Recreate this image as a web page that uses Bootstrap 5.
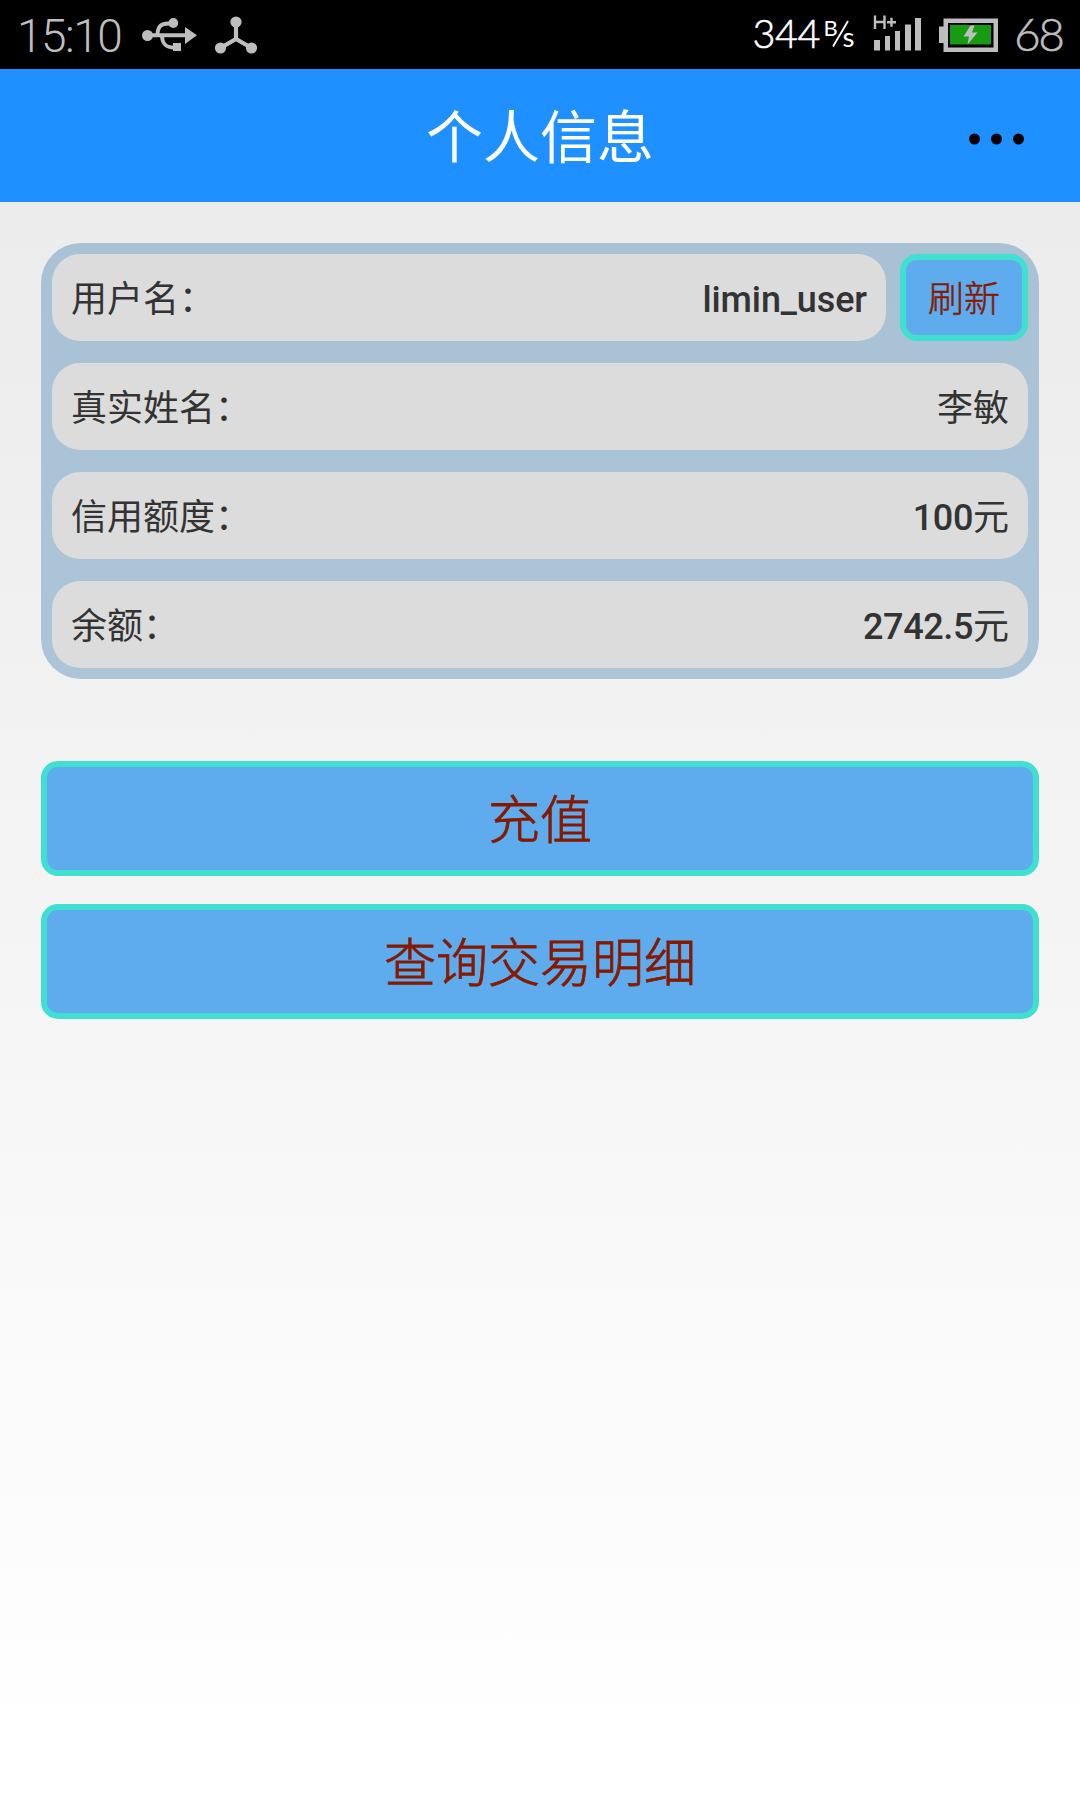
<!DOCTYPE html>
<html lang="zh-CN">
<head>
<meta charset="utf-8">
<meta name="viewport" content="width=device-width, initial-scale=1">
<title>个人信息</title>
<link href="https://cdn.jsdelivr.net/npm/bootstrap@5.3.0/dist/css/bootstrap.min.css" rel="stylesheet">
<style>
  body { font-family: Roboto, "Noto Sans CJK SC", sans-serif; color: #333; min-height: 1800px; background: linear-gradient(#e9e9e9, #fff 1750px); }
  .status-bar { height: 69px; background: #000; color: #bebebe; padding: 0 17px; line-height: 69px; }
  .clock { font-size: 46px; font-weight: 300; width: 106px; padding-top: 2px; letter-spacing: -1.5px; }
  .battery-level { font-family: Lato, sans-serif; font-weight: 300; font-size: 46px; width: 49px; line-height: 67px; letter-spacing: -2.500px; -webkit-text-stroke: .5px #bebebe; }
  .title-bar { height: 133px; background: #1e90ff; color: #fff; }
  .title-bar h1 { font-size: 57px; font-weight: 400; line-height: 133px; padding-top: 3px; }
  .more-btn { right: 50px; top: 3px; height: 133px; }
  .page-body { padding: 41px; }
  .info-panel { background: rgba(70, 130, 180, .4); border-radius: 40px; padding: 11px; gap: 22px; }
  .info-line { height: 87px; border-radius: 28px; background: #dcdcdc; padding: 3px 19px 0; font-size: 36px; font-weight: 400; line-height: 87px; }
  .info-value { font-weight: 500; letter-spacing: -.1px; }
  .amount { letter-spacing: -.4px; }
  .han { font-weight: 400; letter-spacing: 0; }
  .line-group { gap: 14px; }
  .action-btn, .action-btn:hover { --bs-btn-line-height: 1; background: #5eabee; border: 6px solid #40e0d0; border-radius: 17px; color: #861a00; font-weight: 300; -webkit-text-stroke: .8px #861a00; padding: 6px 0 0; }
  .refresh-btn, .refresh-btn:hover { width: 128px; height: 87px; font-size: 36px; padding-top: 4px; -webkit-text-stroke-width: .5px; }
  .wide-btn { height: 115px; font-size: 52px; }
  .action-list { margin-top: 82px; gap: 28px; }
</style>
</head>
<body>
<div class="status-bar d-flex justify-content-between">
  <div class="d-flex">
    <span class="clock">15:10</span>
    <svg width="140" height="69" viewBox="123 0 140 69" fill="#bebebe">
      <circle cx="147.500" cy="35.500" r="5.500"/><circle cx="173.300" cy="23" r="4.900"/>
      <path d="M173 43h8v8h-8zM185 27l12 8.300-12 8.700z"/>
      <path d="M147 35.300H187M157.500 34C158 25 162 23.300 172 23.300M162 36C162.500 44.500 166 47.500 174 47.500" fill="none" stroke="#bebebe" stroke-width="4"/>
      <path d="M236 22V39M220.500 48L236 39L251.500 48" fill="none" stroke="#bebebe" stroke-width="4.200"/>
      <circle cx="236" cy="22" r="5.600"/><circle cx="220.500" cy="48" r="5.600"/><circle cx="251.500" cy="48" r="5.600"/>
    </svg>
  </div>
  <div class="d-flex">
    <svg width="264" height="69" viewBox="750 0 264 69" fill="#bebebe">
      <g fill="#fff" font-family="Lato, sans-serif">
        <text x="752.500" y="47.500" font-size="39.500" font-weight="300" textLength="68" stroke="#fff" stroke-width=".6">344</text>
        <text x="823.500" y="36" font-size="22">B</text>
        <text x="842.500" y="47" font-size="26" textLength="12" lengthAdjust="spacingAndGlyphs">s</text>
        <path d="M848 21L833 46.500" stroke="#fff" stroke-width="1.800"/>
      </g>
      <path d="M874 40h6v10.500h-6zM885 36h5v14.500h-5zM895 31h5v19.500h-5zM905 24.500h6v26h-6zM915 18h6v32.500h-6z"/>
      <path d="M875 15.500V29M884.500 15.500V29M875 22H884.500M887 22.300H896M891.500 17.800V26.800" stroke="#bebebe" stroke-width="2.400" fill="none"/>
      <path fill-rule="evenodd" d="M943.500 18.500H998V52H943.500V43H939V26.500H943.500zM948 23V47.500H993.500V23z"/>
      <path d="M950 25h41v19.500h-41z" fill="#179b12"/>
      <path d="M970.500 25.500L963.500 36.500H969L967.500 44.500L977.500 32.500H972L974.500 25.500z"/>
    </svg>
    <span class="battery-level">68</span>
  </div>
</div>
<header class="title-bar position-relative text-center">
  <h1 class="m-0">个人信息</h1>
  <button class="more-btn btn position-absolute p-0 border-0 rounded-0 d-flex align-items-center" aria-label="更多">
    <svg width="62" height="16" viewBox="968 0 62 16"><circle cx="974.500" cy="8" r="5.500"/><circle cx="996.500" cy="8" r="5.500"/><circle cx="1018.500" cy="8" r="5.500"/></svg>
  </button>
</header>
<main class="page-body">
  <section class="info-panel d-flex flex-column">
    <div class="line-group d-flex">
      <div class="info-line d-flex justify-content-between flex-grow-1"><span>用户名：</span><span class="info-value">limin_user</span></div>
      <button class="btn action-btn refresh-btn">刷新</button>
    </div>
    <div class="info-line d-flex justify-content-between"><span>真实姓名：</span><span>李敏</span></div>
    <div class="info-line d-flex justify-content-between"><span>信用额度：</span><span class="info-value amount">100<span class="han">元</span></span></div>
    <div class="info-line d-flex justify-content-between"><span>余额：</span><span class="info-value amount">2742.5<span class="han">元</span></span></div>
  </section>
  <div class="action-list d-flex flex-column">
    <button class="btn action-btn wide-btn">充值</button>
    <button class="btn action-btn wide-btn">查询交易明细</button>
  </div>
</main>
<script src="https://cdn.jsdelivr.net/npm/bootstrap@5.3.0/dist/js/bootstrap.bundle.min.js"></script>
</body>
</html>
